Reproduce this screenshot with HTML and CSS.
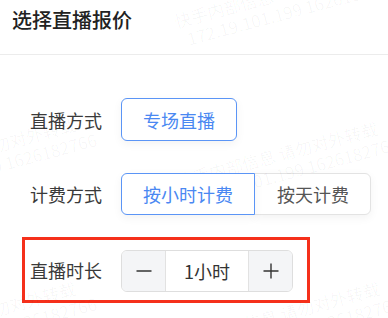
FILE: index.html
```html
<!DOCTYPE html>
<html lang="zh">
<head>
<meta charset="utf-8">
<title>选择直播报价</title>
<link rel="stylesheet" href="styles.css">
</head>
<body>
<div class="page">
  <div class="header">选择直播报价</div>
  <div class="content">
    <div class="row">
      <div class="label">直播方式</div>
      <div class="btn active">专场直播</div>
    </div>
    <div class="row row-2">
      <div class="group">
        <div class="label">计费方式</div>
        <div class="btn active seg-left">按小时计费</div>
        <div class="btn seg-right">按天计费</div>
      </div>
    </div>
    <div class="row highlight">
      <div class="label">直播时长</div>
      <div class="stepper">
        <div class="step-btn">
          <svg width="16" height="16" viewBox="0 0 16 16"><path d="M0.5 8H15.5" stroke="#333" stroke-width="1.4" fill="none"/></svg>
        </div>
        <div class="step-value">1小时</div>
        <div class="step-btn">
          <svg width="16" height="16" viewBox="0 0 16 16"><path d="M0.5 8H15.5M8 0.5V15.5" stroke="#333" stroke-width="1.4" fill="none"/></svg>
        </div>
      </div>
    </div>
  </div>
  <div class="wm wm-a"><span>快手内部信息 请勿对外转载</span><span>172.19.101.199 1626182766</span></div>
  <div class="wm wm-b"><span>快手内部信息 请勿对外转载</span><span>172.19.101.199 1626182766</span></div>
  <div class="wm wm-c"><span>快手内部信息 请勿对外转载</span><span>172.19.101.199 1626182766</span></div>
  <div class="wm wm-d"><span>快手内部信息 请勿对外转载</span><span>172.19.101.199 1626182766</span></div>
  <div class="wm wm-e"><span>快手内部信息 请勿对外转载</span><span>172.19.101.199 1626182766</span></div>
</div>
</body>
</html>
```
FILE: styles.css
```css
* { box-sizing: border-box; }
html, body {
  margin: 0;
  padding: 0;
  background: #fff;
}
body {
  font-family: "Noto Sans CJK SC", "Noto Sans", sans-serif;
  color: #333;
}
.page {
  position: relative;
  width: 388px;
  height: 318px;
  overflow: hidden;
}
.header {
  height: 55px;
  padding: 0 0 0 12px;
  font-size: 20px;
  font-weight: 500;
  line-height: 40px;
  color: #222;
  border-bottom: 1px solid #ececec;
}
.content {
  display: flex;
  flex-direction: column;
  padding-top: 43px;
}
.row {
  display: flex;
  align-items: center;
  padding-left: 30px;
}
.row-2 {
  margin-top: 32px;
}
.group {
  display: flex;
  align-items: center;
}
.label {
  width: 91px;
  font-size: 18px;
  line-height: 24px;
  color: #3a3a3a;
  flex: none;
}
.btn {
  height: 43px;
  padding: 0 21px;
  display: flex;
  align-items: center;
  font-size: 18px;
  color: #555;
  border: 1px solid #e3e3e3;
  border-radius: 6px;
  background: #fff;
  box-shadow: 0 3px 10px rgba(0, 0, 0, 0.05);
}
.btn.active {
  color: #4a88f2;
  border: 1.5px solid #5b95f6;
  position: relative;
  z-index: 1;
}
.seg-left {
  height: 42px;
  border-top-right-radius: 0;
  border-bottom-right-radius: 0;
}
.seg-right {
  height: 42px;
  margin-left: -1px;
  padding: 0 21px 0 22px;
  border-top-left-radius: 0;
  border-bottom-left-radius: 0;
}
.highlight {
  margin: 22px 0 0 22px;
  width: 288px;
  height: 66px;
  padding: 0 0 0 5px;
  border: 3px solid #f5301b;
  align-items: center;
}
.stepper {
  display: flex;
  height: 42px;
  width: 172px;
  border: 1px solid #dedede;
  border-radius: 6px;
  overflow: hidden;
  margin-top: 1px;
}
.step-btn {
  width: 43px;
  flex: none;
  display: flex;
  align-items: center;
  justify-content: center;
  background: #f4f5f7;
}
.step-value {
  flex: 1;
  display: flex;
  align-items: center;
  justify-content: center;
  font-size: 18px;
  color: #333;
  background: #fff;
  border-left: 1px solid #e2e2e2;
  border-right: 1px solid #e2e2e2;
}
.wm {
  position: absolute;
  display: flex;
  flex-direction: column;
  font-family: "Noto Sans CJK SC", sans-serif;
  font-size: 17px;
  line-height: 20px;
  color: rgba(0, 0, 0, 0.035);
  white-space: nowrap;
  transform: rotate(-15deg);
  transform-origin: 0 0;
  pointer-events: none;
}
.wm span:last-child { padding-left: 8px; }
.wm-a { left: 172px; top: 12px; }
.wm-b { left: -128px; top: 168px; }
.wm-c { left: 174px; top: 172px; }
.wm-d { left: -128px; top: 332px; }
.wm-e { left: 176px; top: 332px; }
```
